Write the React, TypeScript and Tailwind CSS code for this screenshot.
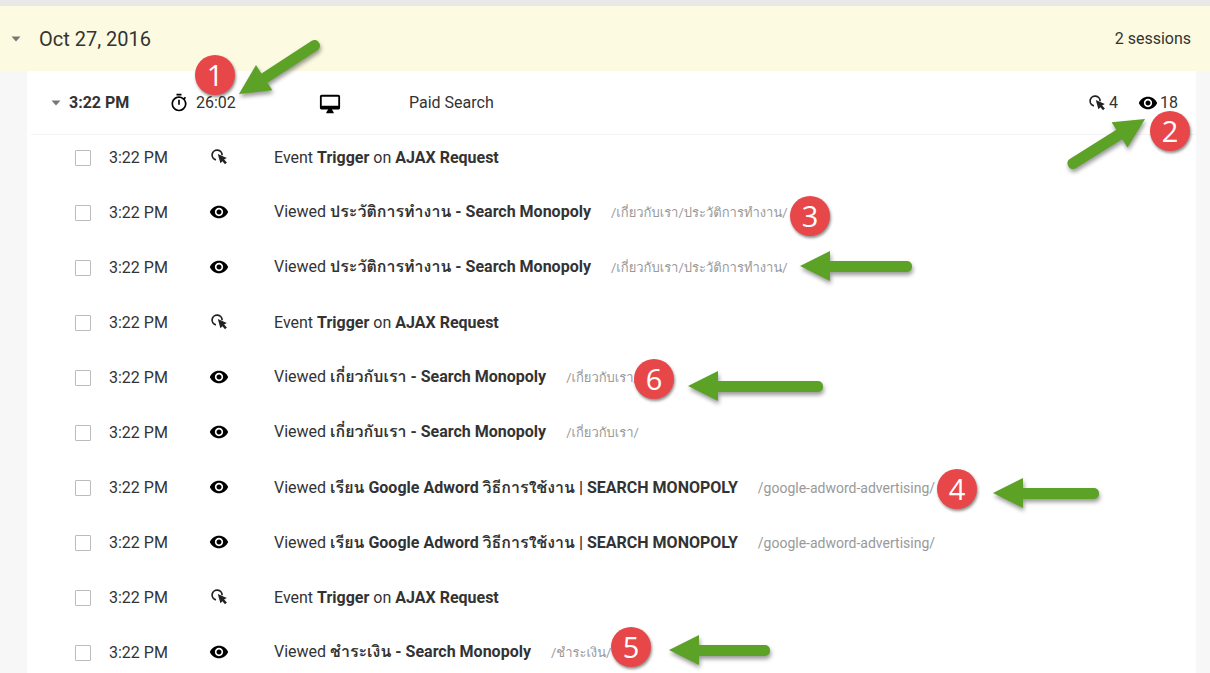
import { ReactNode } from "react";
import { MdOutlineDesktopMac, MdOutlineTimer, MdRemoveRedEye } from "react-icons/md";

interface ActivityItem {
  id: number;
  type: "event" | "view";
  title?: string;
  path?: string;
  latinPath?: boolean;
}

const activities: ActivityItem[] = [
  { id: 1, type: "event" },
  { id: 2, type: "view", title: "ประวัติการทำงาน - Search Monopoly", path: "/เกี่ยวกับเรา/ประวัติการทำงาน/" },
  { id: 3, type: "view", title: "ประวัติการทำงาน - Search Monopoly", path: "/เกี่ยวกับเรา/ประวัติการทำงาน/" },
  { id: 4, type: "event" },
  { id: 5, type: "view", title: "เกี่ยวกับเรา - Search Monopoly", path: "/เกี่ยวกับเรา/" },
  { id: 6, type: "view", title: "เกี่ยวกับเรา - Search Monopoly", path: "/เกี่ยวกับเรา/" },
  { id: 7, type: "view", title: "เรียน Google Adword วิธีการใช้งาน | SEARCH MONOPOLY", path: "/google-adword-advertising/", latinPath: true },
  { id: 8, type: "view", title: "เรียน Google Adword วิธีการใช้งาน | SEARCH MONOPOLY", path: "/google-adword-advertising/", latinPath: true },
  { id: 9, type: "event" },
  { id: 10, type: "view", title: "ชำระเงิน - Search Monopoly", path: "/ชำระเงิน/" },
];

const ClickIcon = () => (
  <svg width="18" height="16" viewBox="-2 0 18 16" className="shrink-0 overflow-visible">
    <path d="M4.9 10.9A5 5 0 1 1 11.1 6.2" fill="none" stroke="#222" strokeWidth="1.7" />
    <path d="M6.8 5L15.8 8.9L13.1 10.4L15.9 13.4L14 15.2L11.4 12.3L9.4 14.2Z" fill="#222" />
  </svg>
);

const Caret = () => (
  <svg width="10" height="6" viewBox="0 0 10 6">
    <path d="M0.5 0.5H9.5L5 5.5Z" fill="#777" />
  </svg>
);

interface BadgeProps {
  className: string;
  children: ReactNode;
}

const Badge = ({ className, children }: BadgeProps) => (
  <span
    className={`absolute flex size-10 items-center justify-center rounded-full bg-[#e84749] pb-[2px] font-['Open_Sans',sans-serif] text-[29px] leading-none font-medium text-white shadow-[1px_2px_3px_rgba(0,0,0,0.45)] ${className}`}
  >
    {children}
  </span>
);

interface ArrowProps {
  className: string;
  length: number;
  angle?: number;
}

// className places the tip, the shaft runs to the right of it before rotation
const Arrow = ({ className, length, angle = 0 }: ArrowProps) => (
  <svg width="1" height="1" className={`absolute overflow-visible drop-shadow-[1px_3px_2px_rgba(0,0,0,0.4)] ${className}`}>
    <g transform={`rotate(${angle})`} fill="#5ca226">
      <path d="M0 0L30 -15V15Z" />
      <rect x="26" y="-5" width={length - 26} height="11" rx="5" />
    </g>
  </svg>
);

const ActivityRow = ({ item }: { item: ActivityItem }) => (
  <li className="flex h-[55px] items-center pb-[10px] pl-12">
    <input
      type="checkbox"
      aria-label={`Select activity ${item.id}`}
      className="mr-[18px] size-4 shrink-0 appearance-none rounded-[1px] border border-[#bcbcbc] bg-white"
    />
    <span className="w-[100px] shrink-0">3:22 PM</span>
    <span className="flex w-[65px] shrink-0 pb-[2px]">
      {item.type === "event" ? <ClickIcon /> : <MdRemoveRedEye size={20} className="text-black" />}
    </span>
    {item.type === "event" ? (
      <p>
        Event <b>Trigger</b> on <b>AJAX Request</b>
      </p>
    ) : (
      <p className="whitespace-nowrap">
        Viewed <b>{item.title}</b>
        <a href="#" className={`ml-5 text-[#999] ${item.latinPath ? "text-sm" : "text-[13px]"}`}>{item.path}</a>
      </p>
    )}
  </li>
);

export default function App() {
  return (
    <main className="relative h-screen overflow-hidden bg-[#f7f7f7] font-[Roboto,Tahoma,Loma,Waree,Garuda,sans-serif] text-base leading-6 text-[#333]">
      <div className="h-[6px] bg-[#e8e8e8]" />
      <header className="flex h-[65px] items-center bg-[#fcfbe1] pr-[19px] pl-[11px]">
        <button type="button" aria-label="Toggle day">
          <Caret />
        </button>
        <h1 className="ml-[18px] text-xl">Oct 27, 2016</h1>
        <span className="ml-auto">2 sessions</span>
      </header>

      <section className="mr-[14px] ml-[27px] min-h-full bg-white">
        <div className="ml-1 flex h-16 items-center border-b border-[#f3f3f3] pr-[18px] pl-5">
          <button type="button" aria-label="Toggle session">
            <Caret />
          </button>
          <b className="ml-2 w-[100px]">3:22 PM</b>
          <span className="flex w-[150px] items-center gap-[7px]">
            <MdOutlineTimer size={20} className="text-black" />
            26:02
          </span>
          <span className="w-[90px] pt-[2px]">
            <MdOutlineDesktopMac size={22} className="text-black" />
          </span>
          <span>Paid Search</span>
          <span className="ml-auto flex items-center gap-1">
            <ClickIcon />4
          </span>
          <span className="ml-5 flex items-center gap-[2px]">
            <MdRemoveRedEye size={20} className="text-black" />
            18
          </span>
        </div>
        <ul>
          {activities.map((item) => (
            <ActivityRow key={item.id} item={item} />
          ))}
        </ul>
      </section>

      <Badge className="top-[55px] left-[195px]">1</Badge>
      <Badge className="top-[111px] right-5">2</Badge>
      <Badge className="top-[196px] left-[790px]">3</Badge>
      <Badge className="top-[469px] left-[937px]">4</Badge>
      <Badge className="top-[627px] left-[611px]">5</Badge>
      <Badge className="top-[359px] left-[634px]">6</Badge>

      <Arrow className="top-[94px] left-[239px]" length={95} angle={-33} />
      <Arrow className="top-[119px] right-[64px]" length={90} angle={148} />
      <Arrow className="top-[266px] left-[800px]" length={112} />
      <Arrow className="top-[386px] left-[688px]" length={135} />
      <Arrow className="top-[493px] left-[993px]" length={106} />
      <Arrow className="top-[650px] left-[669px]" length={101} />
    </main>
  );
}
